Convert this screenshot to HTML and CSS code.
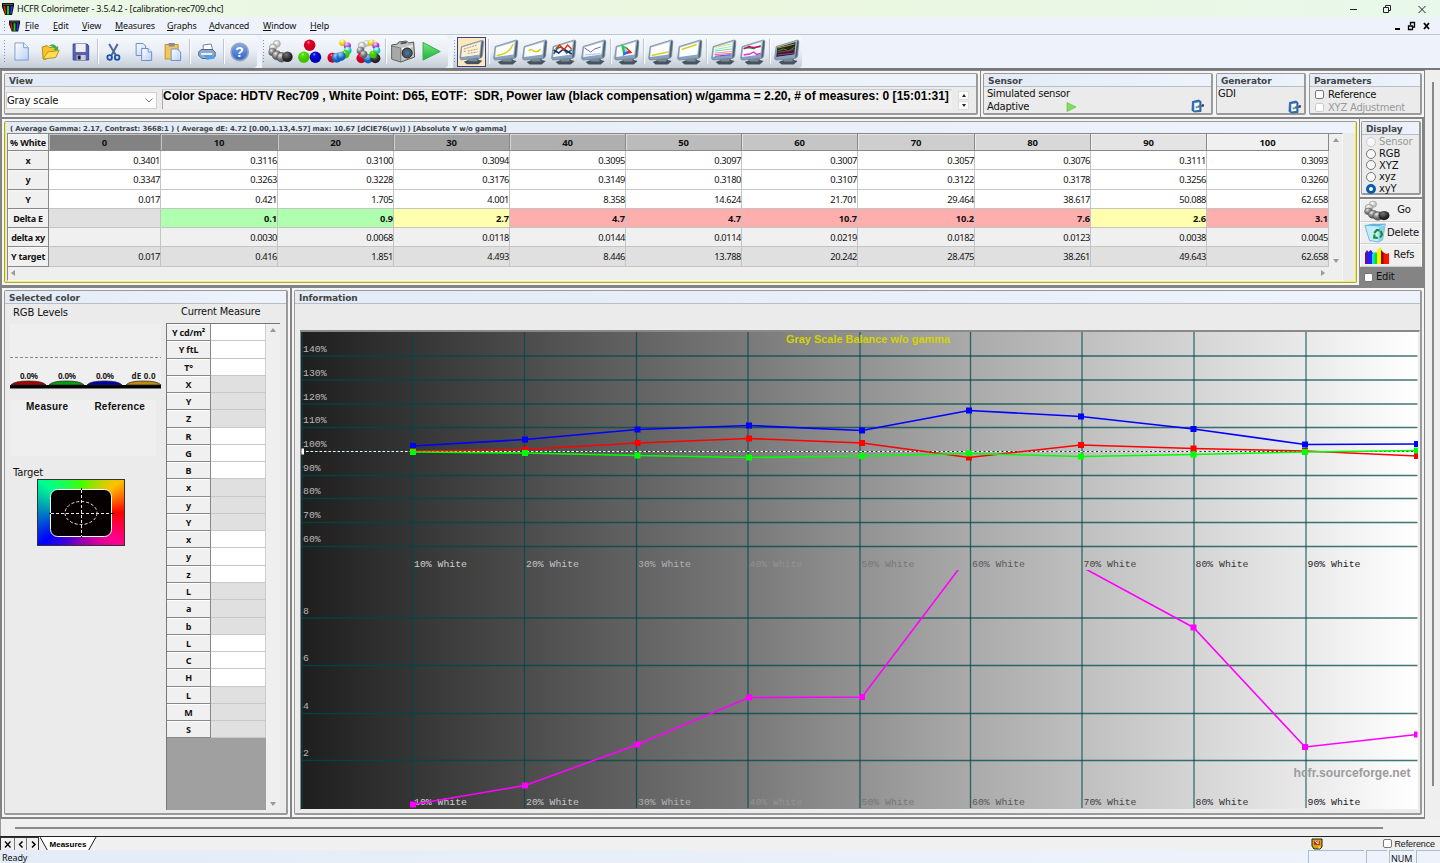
FILE: index.html
```
<!DOCTYPE html>
<html lang="en">
<head>
    <meta charset="UTF-8">
    <title>HCFR Colorimeter - 3.5.4.2 - [calibration-rec709.chc]</title>
    <link rel="stylesheet" href="styles.css">
</head>
<body>
    <!-- Shared icon parts -->
    <svg class="defs" width="0" height="0">
        <defs>
            <radialGradient id="gGray" cx="35%" cy="30%"><stop offset="0" stop-color="#eee"/><stop offset=".4" stop-color="#aaa"/><stop offset="1" stop-color="#666"/></radialGradient>
            <radialGradient id="gLight" cx="40%" cy="35%"><stop offset="0" stop-color="#fff"/><stop offset="1" stop-color="#bbb"/></radialGradient>
            <radialGradient id="gDark" cx="40%" cy="30%"><stop offset="0" stop-color="#777"/><stop offset="1" stop-color="#222"/></radialGradient>
            <radialGradient id="gRed" cx="40%" cy="25%"><stop offset="0" stop-color="#ff9090"/><stop offset=".3" stop-color="#e80028"/><stop offset="1" stop-color="#c80020"/></radialGradient>
            <radialGradient id="gGreen" cx="40%" cy="25%"><stop offset="0" stop-color="#c0ff90"/><stop offset=".3" stop-color="#50e000"/><stop offset="1" stop-color="#40c400"/></radialGradient>
            <radialGradient id="gBlue" cx="40%" cy="25%"><stop offset="0" stop-color="#9090ff"/><stop offset=".3" stop-color="#1010e0"/><stop offset="1" stop-color="#0000b8"/></radialGradient>
            <radialGradient id="gSky" cx="40%" cy="25%"><stop offset="0" stop-color="#a0d0ff"/><stop offset="1" stop-color="#1060c0"/></radialGradient>
            <radialGradient id="gCyan" cx="40%" cy="25%"><stop offset="0" stop-color="#e0ffff"/><stop offset="1" stop-color="#10c0b0"/></radialGradient>
            <radialGradient id="gMag" cx="40%" cy="25%"><stop offset="0" stop-color="#ffd0ff"/><stop offset="1" stop-color="#a030d0"/></radialGradient>
            <radialGradient id="gYel" cx="40%" cy="25%"><stop offset="0" stop-color="#ffffd0"/><stop offset="1" stop-color="#e8c800"/></radialGradient>
            <linearGradient id="gPage" x2="1" y2="1"><stop offset="0" stop-color="#fff"/><stop offset="1" stop-color="#b8d0f8"/></linearGradient>
            <linearGradient id="gCase" x2="0" y2="1"><stop offset="0" stop-color="#b9c6d4"/><stop offset="1" stop-color="#7f9cb8"/></linearGradient>
            <linearGradient id="gPlay" x2="0" y2="1"><stop offset="0" stop-color="#7ae878"/><stop offset="1" stop-color="#18b040"/></linearGradient>
            <linearGradient id="gHelp" x2="0" y2="1"><stop offset="0" stop-color="#7da8f0"/><stop offset="1" stop-color="#3060c8"/></linearGradient>
        </defs>
        <symbol id="logo" viewBox="0 0 12 12">
            <path d="M0 0h12v3l-2 9H3L0 4z" fill="#111"/>
            <path d="M1 1h10v1H1z" fill="#555"/>
            <path d="M1.4 3l1.8 0 1 8H3z" fill="#f01818"/><path d="M5 3h2v8.5H5z" fill="#10d020"/><path d="M8.8 3h1.9L9.6 11H8.2z" fill="#2030ff"/>
        </symbol>
        <symbol id="balls" viewBox="0 0 26 26">
            <circle cx="9" cy="5" r="3.700" fill="url(#gLight)" stroke="#999" stroke-width=".6"/>
            <circle cx="5" cy="9" r="3.800" fill="url(#gLight)" stroke="#888" stroke-width=".6"/>
            <circle cx="4.500" cy="13.500" r="4" fill="url(#gGray)" stroke="#666" stroke-width=".6"/>
            <circle cx="9" cy="17" r="4.800" fill="url(#gGray)" stroke="#555" stroke-width=".6"/>
            <circle cx="14" cy="19" r="5" fill="url(#gGray)" stroke="#444" stroke-width=".6"/>
            <circle cx="20" cy="18.500" r="5.500" fill="url(#gDark)"/>
        </symbol>
        <symbol id="monitor" viewBox="0 0 26 26">
            <path d="M5 23l5-2v-2h10v2l4 1-4 3.500H8z" fill="#46535f"/>
            <path d="M10 20h9v2.500h-9z" fill="#7e8a96"/>
            <path d="M2.500 7.500L23 1.200q2.500-.6 2.300 1.500l-1.300 14q-.2 2.200-2.400 2.800L3 21q-2 0-2-2z" fill="url(#gCase)" stroke="#6b7f93" stroke-width=".7"/>
            <path d="M23.300 1.800q1.700-.4 1.600 1.500l-1.400 13.500q-.5 2-2 2.300z" fill="#4c6074"/>
            <path d="M3.500 8.500L22 3l-1.300 12.500-18.200 2.500z" fill="#fcfdfd"/>
        </symbol>
        <symbol id="edit" viewBox="0 0 13 14">
            <path d="M1.500 2.500L8 1l2 1.500v10L3.500 13 1 11.500z" fill="#2f74c4" stroke="#164880" stroke-width=".7"/>
            <path d="M3.300 4l5-.8v7.600l-5 .6z" fill="#fff"/>
            <path d="M4.500 7.500l3-1 5-1v2l-4.500 1-3 1z" fill="#3b6d9c"/><path d="M5 6.500l2 1-1 2z" fill="#e8cf60"/><path d="M11 5.200l1.800 0v2.200l-1.600.2z" fill="#5a2b20"/>
        </symbol>
    </svg>

    <header class="titlebar">
        <svg class="logo" width="12" height="12"><use href="#logo"/></svg>
        <span class="title">HCFR Colorimeter - 3.5.4.2 - [calibration-rec709.chc]</span>
        <svg class="winctl" width="80" height="14" fill="none" stroke="#222">
            <path d="M2 7.500h7"/><path d="M35.500 5.500h5v5h-5zM37.500 5V3.500h5v5H41"/><path d="M70.500 4l7 7M77.500 4l-7 7"/>
        </svg>
    </header>

    <nav class="menubar">
        <i class="grip"></i>
        <svg width="11" height="12"><use href="#logo"/></svg>
        <span class="m-file"><u>F</u>ile</span><span class="m-edit"><u>E</u>dit</span><span class="m-view"><u>V</u>iew</span><span class="m-meas"><u>M</u>easures</span><span class="m-graph"><u>G</u>raphs</span><span class="m-adv"><u>A</u>dvanced</span><span class="m-win"><u>W</u>indow</span><span class="m-help"><u>H</u>elp</span>
        <svg class="winctl" width="36" height="10" fill="none" stroke="#000">
            <path d="M0 8h5" stroke-width="2"/><path d="M13.500 5h4v3.500h-4zM15.500 4V1.500h4V6H18" stroke-width="1.300"/><path d="M29 2l5 6M34 2l-5 6" stroke-width="1.800"/>
        </svg>
    </nav>

    <div class="toolbars">
        <div class="toolbar t-file">
            <i class="grip"></i>
            <svg height="21" viewBox="0 0 18 22"><path d="M2 2h9l5 5v13H2z" fill="url(#gPage)" stroke="#7c9cd0"/><path d="M11 2v5h5" fill="#e8f0ff" stroke="#7c9cd0"/></svg>
            <svg height="20" viewBox="0 0 20 20"><path d="M1.500 5l5-1.500 2 2 7-.5v3L5 17.500l-2.500-.5z" fill="#f4c430" stroke="#b88a18"/><path d="M2.500 17L7 10l11.500-1.500-3.500 7z" fill="#ffe050" stroke="#c09020"/><path d="M8 4q5-4 8 1l1.500-1v4.500L13 8l1.300-1.300Q12 3.500 8 4z" fill="#38b048"/></svg>
            <svg height="20" viewBox="0 0 18 20"><path d="M1.500 2h14l1.500 2v14h-15.500z" fill="#5560b0" stroke="#404890"/><path d="M4 2h10v8H4z" fill="#f0f0f4"/><path d="M5 13h9v5H5z" fill="#c8ccd8"/><path d="M6 13.500h3v4H6z" fill="#223"/></svg>
            <i class="sep"></i>
            <svg height="20" viewBox="0 0 16 20" fill="none"><path d="M3.500 2l6.500 11M12 2L6 13" stroke="#4a6a98" stroke-width="2"/><circle cx="4" cy="15.500" r="2.300" stroke="#1c50b0" stroke-width="1.800"/><circle cx="11.500" cy="15.500" r="2.300" stroke="#1c50b0" stroke-width="1.800"/></svg>
            <svg height="20" viewBox="0 0 18 20" fill="url(#gPage)" stroke="#6f8fcb"><path d="M1.500 1.500h7l2.500 2.500v9.500H1.500z"/><path d="M7 6.500h6.500L17 10v8.500H7z"/><path d="M13.500 6.500V10H17" fill="#fff"/></svg>
            <svg height="20" viewBox="0 0 18 20"><path d="M1.500 2.500h13V17h-13z" fill="#f0c860" stroke="#c09030"/><path d="M5 1h6v3.500H5z" fill="#8888a0"/><path d="M7.500 7h6l3.500 3v8.500H7.500z" fill="url(#gPage)" stroke="#6f8fcb"/></svg>
            <i class="sep"></i>
            <svg height="18" viewBox="0 0 19 18"><path d="M6 8l0-6 8-1 1.500 6z" fill="#fff" stroke="#6f86a8"/><path d="M1.500 9L4 6.500h11l3 2.500v4.500l-3 2H5l-3.500-3z" fill="#8ea9cc" stroke="#4c6890"/><path d="M7 11.500h8l2.500 4-8 1.500z" fill="#4ca0e8"/><path d="M4 10h11v2H4z" fill="#eef"/></svg>
            <i class="sep"></i>
            <svg height="20" viewBox="0 0 20 20"><circle cx="10" cy="10" r="8.600" fill="url(#gHelp)" stroke="#98a4b8" stroke-width="1.600"/><text class="help-q" x="10" y="15" text-anchor="middle">?</text></svg>
        </div>
        <div class="toolbar t-meas">
            <i class="grip"></i>
            <svg height="25" viewBox="0 0 26 26"><use href="#balls" width="26" height="26"/></svg>
            <svg height="25" viewBox="0 0 26 26"><circle cx="13" cy="6.500" r="6" fill="url(#gRed)"/><circle cx="7" cy="19" r="6" fill="url(#gGreen)"/><circle cx="19" cy="19" r="6" fill="url(#gBlue)"/></svg>
            <svg height="25" viewBox="0 0 26 26"><circle cx="16" cy="4" r="3.500" fill="url(#gYel)"/><circle cx="21" cy="7" r="3.700" fill="url(#gMag)"/><circle cx="21.500" cy="12" r="3.900" fill="url(#gCyan)"/><circle cx="19" cy="16" r="4.300" fill="url(#gGreen)"/><circle cx="5.500" cy="19.500" r="5.200" fill="url(#gRed)"/><circle cx="10" cy="19.500" r="5.200" fill="url(#gSky)"/><circle cx="14.500" cy="18" r="4.800" fill="url(#gSky)"/></svg>
            <svg height="25" viewBox="0 0 26 26"><circle cx="11" cy="4.500" r="3.500" fill="url(#gLight)"/><circle cx="6" cy="7" r="3.800" fill="url(#gLight)" stroke="#999" stroke-width=".5"/><circle cx="4.500" cy="12" r="4" fill="url(#gGray)"/><circle cx="16" cy="4" r="3.500" fill="url(#gYel)"/><circle cx="20.500" cy="7" r="3.700" fill="url(#gMag)"/><circle cx="21.500" cy="12" r="3.700" fill="url(#gCyan)"/><circle cx="5.500" cy="20" r="5.200" fill="url(#gRed)"/><circle cx="12.500" cy="20.500" r="5" fill="url(#gSky)"/><circle cx="20" cy="20" r="5.200" fill="url(#gDark)"/><circle cx="17.500" cy="16" r="3.800" fill="url(#gGreen)"/><circle cx="8" cy="16" r="3.800" fill="url(#gGray)"/></svg>
            <i class="sep"></i>
            <svg height="24" viewBox="0 0 26 24"><path d="M2 5l6-1 1-2 8-1 2 2 5-1 1 15-14 5L2 19z" fill="#c4c4c4" stroke="#555"/><path d="M2 6l9 2v14l-9-3z" fill="#a8a8a8" stroke="#666" stroke-width=".7"/><path d="M12 8l11-3v2l-11 3z" fill="#eee"/><circle cx="17.500" cy="13" r="5" fill="#555" stroke="#222"/><circle cx="17.500" cy="13" r="2.400" fill="#2878c0"/><path d="M11 3.500l6-1" stroke="#444" stroke-width="1.500"/></svg>
            <svg height="21" viewBox="0 0 22 22"><path d="M2 1.500L20 11 2 20z" fill="url(#gPlay)" stroke="#30a848"/></svg>
        </div>
        <div class="toolbar t-view">
            <i class="grip"></i>
            <svg class="selected" viewBox="0 0 26 26"><use href="#monitor" width="26" height="26"/><path d="M3.500 8.500L22 3l-1.300 12.500-18.200 2.500z" fill="#fdf0d4"/><path d="M5 10l13-4M5 12.500l2-.4M9 12l10-2M9 14.500l10-1.500" stroke="#a0805a" stroke-width=".8" stroke-dasharray="2 1"/></svg>
            <i class="sep"></i>
            <svg height="26" viewBox="0 0 26 26"><use href="#monitor" width="26" height="26"/><path d="M4 16.500Q17 15 20.500 5" fill="none" stroke="#d8d020" stroke-width="1.500"/></svg>
            <svg height="26" viewBox="0 0 26 26"><use href="#monitor" width="26" height="26"/><path d="M7 12q2-3 5 0 4 2 7-2" fill="none" stroke="#d8d020" stroke-width="1.500"/></svg>
            <svg height="26" viewBox="0 0 26 26"><use href="#monitor" width="26" height="26"/><g fill="none" stroke-width="1.500"><path d="M3 15l4-6 4-1 5 6 5-3" stroke="#108020"/><path d="M3 11l5 3 5-4 8 5" stroke="#1020a0"/><path d="M5 10l4-4 4 5 4-5 4 4" stroke="#e83010"/></g></svg>
            <svg height="26" viewBox="0 0 26 26"><use href="#monitor" width="26" height="26"/><path d="M4 9l6 4 4-3 6-2" fill="none" stroke="#6868b8"/><path d="M4 16l16-1.500" stroke="#9a9ae0" stroke-width=".7"/></svg>
            <i class="sep"></i>
            <svg height="26" viewBox="0 0 26 26"><use href="#monitor" width="26" height="26"/><path d="M7.500 5.500l6 3-4 7z" fill="#18d040"/><path d="M13 8l6 6-7 1z" fill="#f02020"/><path d="M9 17l1.500-6 5 3z" fill="#3060f0"/><path d="M11 8.500l4 3-4 2z" fill="#80e8e0"/></svg>
            <i class="sep"></i>
            <svg height="26" viewBox="0 0 26 26"><use href="#monitor" width="26" height="26"/><path d="M4 16.500l16.500-3.500" stroke="#d8d020" stroke-width="1.500"/></svg>
            <svg height="26" viewBox="0 0 26 26"><use href="#monitor" width="26" height="26"/><path d="M5 10.500L20 5.500" stroke="#d8d020" stroke-width="1.500"/></svg>
            <i class="sep"></i>
            <svg height="26" viewBox="0 0 26 26"><use href="#monitor" width="26" height="26"/><g stroke-width="1.100"><path d="M4 8.500l17-3.500" stroke="#e0e060"/><path d="M4 10.500l17-3" stroke="#80f0e8"/><path d="M4 12l17-2" stroke="#80e080"/><path d="M4 14l17-1.500" stroke="#f890d0"/><path d="M4 15.500l17-1" stroke="#f86060"/><path d="M4 17.200l16-1.500" stroke="#5050f0"/></g></svg>
            <svg height="26" viewBox="0 0 26 26"><use href="#monitor" width="26" height="26"/><g fill="none" stroke-width="1.300"><path d="M4 9.500l5-1 5 1 7-3" stroke="#208030"/><path d="M4 10l5-2.500 5 1 7-1" stroke="#d01060"/><path d="M4 16l6-1 4-2 3 2.500 4-1" stroke="#f020e0"/></g></svg>
            <i class="sep"></i>
            <svg height="26" viewBox="0 0 26 26"><use href="#monitor" width="26" height="26"/><path d="M3.500 8.500L22 3l-1.300 12.500-18.200 2.500z" fill="#252525"/><g fill="none" stroke-width="1"><path d="M4 9l17-4" stroke="#b0a020"/><path d="M4 12l6-2 5 2 6-4" stroke="#30a030"/><path d="M4 13.500l17-3" stroke="#b03030"/><path d="M4 16l17-2" stroke="#a030b0"/></g></svg>
        </div>
    </div>

    <div class="workspace">
        <main class="form">
            <section class="row row-top">
                <div class="frame view-frame">
                    <div class="panel">
                        <h2>View</h2>
                        <div class="view-body">
                            <div class="combo">Gray scale<svg width="8" height="5" fill="none" stroke="#777"><path d="M.5.5L4 4 7.500.5"/></svg></div>
                            <div class="info-line"><span>Color Space: HDTV Rec709 , White Point: D65, EOTF:&nbsp; SDR, Power law (black compensation) w/gamma = 2.20, # of measures: 0 [15:01:31]</span></div>
                            <div class="spin"><b class="up"></b><b class="down"></b></div>
                        </div>
                    </div>
                </div>
                <div class="frame side-frame">
                    <div class="panel p-sensor">
                        <h2>Sensor</h2>
                        <div class="lines"><p>Simulated sensor</p><p>Adaptive <svg class="mini-play" width="11" height="10"><path d="M1 .5L10 5 1 9.500z" fill="#7fe05a" stroke="#5cb840" stroke-width=".6"/></svg></p></div>
                        <svg class="edit-icon" width="13" height="14"><use href="#edit"/></svg>
                    </div>
                    <div class="panel p-gen">
                        <h2>Generator</h2>
                        <div class="lines"><p>GDI</p></div>
                        <svg class="edit-icon" width="13" height="14"><use href="#edit"/></svg>
                    </div>
                    <div class="panel p-param">
                        <h2>Parameters</h2>
                        <label class="check"><i></i>Reference</label>
                        <label class="check off"><i></i>XYZ Adjustment</label>
                    </div>
                </div>
            </section>

            <section class="row row-grid">
                <div class="frame">
                    <div class="panel p-grid">
                        <h2>( Average Gamma: 2.17, Contrast: 3668:1 ) ( Average dE: 4.72 [0.00,1.13,4.57] max: 10.67 [dCIE76(uv)] ) [Absolute Y w/o gamma]</h2>
                        <div class="grid-wrap">
                            <div class="grid-main">
                                <div class="datagrid" id="datagrid"></div>
                                <div class="vscroll"><b class="up"></b><b class="down"></b></div>
                            </div>
                            <div class="hscroll"><b class="left"></b><b class="right"></b></div>
                        </div>
                    </div>
                </div>
                <aside class="tools">
                    <div class="frame">
                        <div class="panel p-display">
                            <h2>Display</h2>
                            <label class="radio off"><i></i>Sensor</label>
                            <label class="radio"><i></i>RGB</label>
                            <label class="radio"><i></i>XYZ</label>
                            <label class="radio"><i></i>xyz</label>
                            <label class="radio on"><i></i>xyY</label>
                        </div>
                    </div>
                    <div class="buttons">
                        <div class="btn"><svg width="26" height="21" viewBox="0 0 26 25" preserveAspectRatio="none"><use href="#balls" width="26" height="26"/></svg><span>Go</span></div>
                        <div class="btn"><svg width="24" height="20" viewBox="0 0 26 20" preserveAspectRatio="none"><path d="M1 2.500L23 1l-3 16-4 2-10-1.500z" fill="#c4ecfa" stroke="#6cb8dc"/><path d="M1 2.500L9 .8l14 .2-7 2.500z" fill="#5fb4e4"/><path d="M16 4l-.5 14.500L20 17l3-15z" fill="#8cccec"/><path d="M11 10l3-3 3 .5M18 8l1.500 3.500-2 3M15 15l-4-.5.500-3" fill="none" stroke="#109030" stroke-width="2.200"/></svg><span>Delete</span></div>
                        <div class="btn"><svg width="26" height="17" viewBox="0 0 26 17"><path d="M1 17V6l2-3 2 3v11z" fill="#6010a0"/><path d="M4 17V5l3-2 2 3v11z" fill="#2020ff"/><path d="M8 17V7l2-2 2 2v10z" fill="#10e0e0"/><path d="M10.500 17V8l1-3 2 1v11z" fill="#10e010"/><path d="M13 17V3l3-2.500L18 3v14z" fill="#fff000"/><path d="M17 17V3l3 3v11z" fill="#801000"/><path d="M19.500 17V5.500l3 1.500 2.500-1v11z" fill="#ff1000"/></svg><span>Refs</span></div>
                    </div>
                    <label class="check edit-check"><i></i>Edit</label>
                </aside>
            </section>

            <section class="row row-bottom">
                <div class="frame">
                    <div class="panel p-color">
                        <h2>Selected color</h2>
                        <div class="color-body">
                            <div class="color-left">
                                <span class="caption rgb-caption">RGB Levels</span>
                                <svg class="levels" width="151" height="65">
                                    <rect width="151" height="65" fill="#efefef"/>
                                    <path d="M0 33.500h151" stroke="#888" stroke-dasharray="3 2"/>
                                    <rect y="61" width="151" height="3.500" fill="#000"/>
                                    <g stroke="#222" stroke-width=".7">
                                        <path d="M1 61q3-4 17.500-4T36 61z" fill="#a80000"/><path d="M39 61q3-4 17.500-4T74 61z" fill="#00a010"/><path d="M77 61q3-4 17.500-4T112 61z" fill="#0000a8"/><path d="M116 61q3-4 17.500-4T151 61z" fill="#c08a10"/>
                                    </g>
                                    <g class="lvl"><text x="10" y="55" textLength="18">0.0%</text><text x="48" y="55" textLength="18">0.0%</text><text x="86" y="55" textLength="18">0.0%</text><text x="121.500" y="55" textLength="24">dE 0.0</text></g>
                                </svg>
                                <div class="compare"><span>Measure</span><span>Reference</span></div>
                                <span class="caption">Target</span>
                                <div class="target">
                                    <svg width="86" height="66" fill="none"><rect x="12.500" y="9.500" width="61" height="47" rx="7" fill="#060000" stroke="#fff"/><g stroke="#e8e8e8" stroke-dasharray="3 2"><ellipse cx="43" cy="33" rx="16" ry="11.500"/><path d="M43.500 10v46M13 33.500h61"/></g><path d="M11 33.500h2M73 33.500h3M43.500 8v2M43.500 56v2" stroke="#000"/></svg>
                                </div>
                            </div>
                            <div class="color-right">
                                <span class="caption">Current Measure</span>
                                <div class="measure-wrap">
                                    <div class="measures" id="measures"></div>
                                    <div class="vscroll"><b class="up"></b><b class="down"></b></div>
                                </div>
                            </div>
                        </div>
                    </div>
                </div>
                <div class="frame grow">
                    <div class="panel p-info">
                        <h2>Information</h2>
                        <div class="chart-box">
                            <svg id="chart" width="1117" height="477" viewBox="301.500 332 1117 477"></svg>
                        </div>
                    </div>
                </div>
            </section>
        </main>
        <div class="outer-v"><i></i></div>
    </div>
    <div class="outer-h"><i></i></div>

    <footer class="tabs">
        <div class="nav-btns">
            <svg width="13" height="13"><path d="M4 3.500l5.500 6M9.500 3.500l-5.500 6" stroke="#000" stroke-width="1.300"/></svg>
            <svg width="12" height="13"><path d="M7.500 3.500L4.500 6.500l3 3" fill="none" stroke="#000" stroke-width="1.500"/></svg>
            <svg width="12" height="13"><path d="M5 3.500l3 3-3 3" fill="none" stroke="#000" stroke-width="1.500"/></svg>
        </div>
        <svg class="tab" width="58" height="14"><path d="M0 0l7.500 13.500h41L56 0" fill="#fff" stroke="#222"/><text x="9.500" y="10" textLength="37" lengthAdjust="spacingAndGlyphs">Measures</text></svg>
        <svg class="palette" width="12" height="12"><path d="M1 1h10v8l-2 2H3L1 8z" fill="#c8a810" stroke="#222"/><path d="M3 3h6v4H3z" fill="#e82020"/><path d="M4 3l3 3M7 3v3" stroke="#fff"/><path d="M7 8l3 1-2 2z" fill="#ffe820"/></svg>
        <label class="check"><i></i>Reference</label>
    </footer>
    <div class="statusbar"><span class="ready">Ready</span><span class="cell c1"></span><span class="cell c2"></span><span class="cell c3">NUM</span><span class="cell c4"></span></div>

    <script>
        // Gray scale measures, one array entry per column
        const rows = [
            ['x', ['0.3401', '0.3116', '0.3100', '0.3094', '0.3095', '0.3097', '0.3007', '0.3057', '0.3076', '0.3111', '0.3093']],
            ['y', ['0.3347', '0.3263', '0.3228', '0.3176', '0.3149', '0.3180', '0.3107', '0.3122', '0.3178', '0.3256', '0.3260']],
            ['Y', ['0.017', '0.421', '1.705', '4.001', '8.358', '14.624', '21.701', '29.464', '38.617', '50.088', '62.658']],
            ['Delta E', ['', '0.1', '0.9', '2.7', '4.7', '4.7', '10.7', '10.2', '7.6', '2.6', '3.1']],
            ['delta xy', ['', '0.0030', '0.0068', '0.0118', '0.0144', '0.0114', '0.0219', '0.0182', '0.0123', '0.0038', '0.0045']],
            ['Y target', ['0.017', '0.416', '1.851', '4.493', '8.446', '13.788', '20.242', '28.475', '38.261', '49.643', '62.658']]
        ];
        const headShades = [130, 140, 150, 162, 175, 187, 197, 206, 216, 228, 240];

        let html = '<div class="head first">% White</div>';
        headShades.forEach((s, i) => {
            html += `<div class="head num" style="background:rgb(${s},${s},${s})">${i * 10}</div>`;
        });
        rows.forEach(([name, values], r) => {
            html += `<div class="rowhead">${name}</div>`;
            values.forEach(v => {
                let cls = r < 3 ? 'plain' : r === 4 ? 'light' : 'shade';
                if (r === 3 && v) cls = v < 1 ? 'good' : v < 3 ? 'fair' : 'bad';
                html += `<div class="cell ${cls}">${v}</div>`;
            });
        });
        document.getElementById('datagrid').innerHTML = html;

        const labels = ['Y cd/m²', 'Y ftL', 'T°', 'X', 'Y', 'Z', 'R', 'G', 'B', 'x', 'y', 'Y', 'x', 'y', 'z', 'L', 'a', 'b', 'L', 'C', 'H', 'L', 'M', 'S'];
        document.getElementById('measures').innerHTML = labels.map((l, i) =>
            `<b>${l}</b><span class="${Math.floor(i / 3) % 2 ? 'dark' : ''}"></span>`).join('');

        // Chart
        const xs = [413, 525, 637, 748.500, 860.500, 971, 1082.500, 1194.500, 1306.500];
        const px = [413.500, 525.500, 638, 749.500, 862.500, 969.500, 1081.500, 1194, 1305.500, 1417.500];
        let svg = '<defs><linearGradient id="ramp"><stop offset="0" stop-color="#1e1e1e"/><stop offset=".1" stop-color="#353535"/><stop offset=".4" stop-color="#797979"/><stop offset=".6" stop-color="#aaaaaa"/><stop offset="1" stop-color="#fff"/></linearGradient>' +
            '<clipPath id="lower"><rect x="301" y="570" width="1117" height="239"/></clipPath></defs>' +
            '<rect x="301" y="331" width="1118" height="478" fill="url(#ramp)"/>';
        svg += '<g stroke="#004848" stroke-opacity=".75" stroke-width="1.300">';
        xs.forEach(x => svg += `<path d="M${x} 332V808"/>`);
        [356, 380, 404, 427.500, 475.500, 498.500, 522.500, 546.500, 618, 665.500, 713.500, 760.500].forEach(y => svg += `<path d="M302 ${y}H1418"/>`);
        svg += '<path d="M302.500 332V808"/></g>';
        svg += '<path d="M302 451.500H1418" stroke="#0a3c3c"/><path d="M302 451.500H1418" stroke="#fff" stroke-dasharray="2.500 2"/>';
        svg += '<rect x="302" y="448.500" width="2.500" height="6" fill="#fff"/>';
        [[353, '140%'], [377, '130%'], [401, '120%'], [424, '110%'], [448, '100%'], [472, '90%'], [495, '80%'], [519, '70%'], [543, '60%'], [615, '8'], [662, '6'], [710, '4'], [757, '2']]
            .forEach(([y, t]) => svg += `<text class="mono" x="303.500" y="${y - 0.600}" fill="#b8b8b8">${t}</text>`);
        const tints = ['#d0d0d0', '#c4c4c4', '#b0b0b0', '#929292', '#777', '#5a5a5a', '#444', '#333', '#222'];
        xs.forEach((x, i) => [567, 805].forEach(y =>
            svg += `<text class="mono" x="${x + 1.500}" y="${y}" fill="${tints[i]}">${(i + 1) * 10}% White</text>`));
        svg += '<text class="chart-title" x="786.500" y="343" textLength="164" lengthAdjust="spacingAndGlyphs">Gray Scale Balance w/o gamma</text>';
        svg += '<text class="site" x="1294" y="776.500" textLength="117" lengthAdjust="spacingAndGlyphs">hcfr.sourceforge.net</text>';

        function series(color, ys, clip) {
            const pts = ys.map((y, i) => `${px[i]},${y}`).join(' ');
            let s = `<g fill="${color}" ${clip ? 'clip-path="url(#lower)"' : ''}><polyline points="${pts}" fill="none" stroke="${color}" stroke-width="1.600"/>`;
            ys.forEach((y, i) => s += `<rect x="${px[i] - 3}" y="${y - 3}" width="6" height="6"/>`);
            return s + '</g>';
        }
        svg += series('#0000ff', [446, 439.500, 429.500, 425.500, 430.500, 410.500, 416.500, 429, 444.500, 444]);
        svg += series('#ff0000', [451, 449.500, 443, 438.500, 443, 457.500, 445, 448.500, 451, 456]);
        svg += series('#00ff00', [452, 453, 455.500, 457.500, 456, 453.500, 456.500, 454.500, 452, 450.500]);
        svg += series('#ff00ff', [804.500, 785.500, 744.500, 697.500, 697, 555.500, 566.500, 627.500, 747, 734.500], true);
        document.getElementById('chart').innerHTML = svg;
    </script>
</body>
</html>
```
FILE: styles.css
```
* {
    margin: 0;
    padding: 0;
    box-sizing: border-box;
}

body {
    width: 1440px;
    height: 863px;
    overflow: hidden;
    display: flex;
    flex-direction: column;
    background: #f0f0f0;
    color: #111;
    font-family: "DejaVu Sans", Verdana, sans-serif;
    font-size: 10px;
    line-height: 12px;
    white-space: nowrap;
}

.defs {
    position: absolute;
}

svg {
    display: block;
    flex: none;
}

b, i {
    font-style: normal;
}

/* title, menu and toolbars */
.titlebar {
    height: 17px;
    flex: none;
    display: flex;
    align-items: center;
    padding: 0 12px 0 2px;
    background: linear-gradient(90deg, #eaf8e6, #ebf7df 50%, #e8f8ea);
    font-family: "Noto Sans", sans-serif;
    font-size: 9px;
}

.title {
    margin-left: 3px;
    letter-spacing: -0.2px;
}

.winctl {
    margin-left: auto;
}

.menubar {
    height: 18px;
    flex: none;
    display: flex;
    align-items: center;
    padding: 0 9px 0 4px;
    background: #eef3fb;
    border-bottom: 1px solid #c3c6ca;
    font-family: "Noto Sans", sans-serif;
    font-size: 9px;
    letter-spacing: -0.15px;
}

.menubar .grip {
    height: 10px;
    margin-right: 4px;
}

.menubar span {
    flex: none;
}

.m-file { width: 28px; margin-left: 5px; }
.m-edit { width: 29px; }
.m-view { width: 33px; }
.m-meas { width: 52px; }
.m-graph { width: 42px; }
.m-adv { width: 54px; }
.m-win { width: 47px; }

.grip {
    width: 1px;
    height: 24px;
    flex: none;
    margin-right: 2px;
    background: repeating-linear-gradient(#7a90b8 0 1px, transparent 1px 3px);
}

.toolbars {
    height: 35px;
    flex: none;
    display: flex;
    background: #eef3fb;
    border-bottom: 2px solid #777;
}

.toolbar {
    display: flex;
    align-items: center;
    flex: none;
    border-radius: 0 4px 4px 0;
    background: linear-gradient(#f6f9fd, #e9eef5 50%, #c3ccd6);
}

.toolbar > svg {
    width: 29.3px;
}

.sep {
    width: 1px;
    height: 25px;
    flex: none;
    margin: 0 1.7px;
    background: #bcc6d4;
    box-shadow: 1px 0 #fff;
}

.t-file {
    width: 257px;
    padding-left: 4px;
    margin-right: 5px;
}

.t-meas {
    width: 186px;
    padding-left: 1px;
    margin-right: 5px;
}

.t-view {
    width: 349px;
    padding-left: 1px;
}

.toolbar > svg.selected {
    height: 30px;
    padding: 1px;
    background: #fde9bc;
    border: 1px solid #3a3f90;
}

.help-q {
    font: bold 14px "Liberation Sans", sans-serif;
    fill: #fff;
}

/* document window */
.workspace {
    height: 749px;
    flex: none;
    display: flex;
    background: #f0f0f0;
}

.form {
    width: 1425px;
    padding: 1px 1px 1px 2px;
    background: #848484;
    display: flex;
    flex-direction: column;
}

.outer-v {
    width: 15px;
    padding: 12px 0 0 7px;
    background: #efefef;
}

.outer-v i {
    display: block;
    width: 2px;
    height: 704px;
    background: #8a8a8a;
}

.outer-h {
    height: 17px;
    flex: none;
    padding: 8px 0 0 14px;
    background: #f0f0f0;
    border-left: 1px solid #999;
}

.outer-h i {
    display: block;
    width: 1368px;
    height: 2px;
    background: #8a8a8a;
}

.row {
    display: flex;
    flex: none;
}

.row-top {
    height: 46px;
    gap: 1px;
    margin-bottom: 2px;
}

.row-grid {
    height: 166px;
    gap: 1px;
    margin-bottom: 3px;
}

.row-bottom {
    height: 529px;
    gap: 2px;
}

.frame {
    background: #f5f5f5;
    padding: 2px;
    display: flex;
    gap: 3px;
}

.panel {
    flex: auto;
    background: #ebebeb;
    border: 2px solid #9a9a9a;
    border-width: 1px 2px 2px 1px;
    border-radius: 2px;
    position: relative;
}

.panel h2 {
    height: 13px;
    padding-left: 4px;
    font-size: 9px;
    line-height: 14px;
    letter-spacing: -0.1px;
    color: #444;
    background: linear-gradient(90deg, #e2ebf6, #eef3fb);
    border-bottom: 1px solid #b8bec6;
}

.view-frame {
    width: 978px;
}

.view-body {
    display: flex;
    padding: 2px 4px 0 1px;
}

.combo {
    width: 151px;
    height: 17px;
    margin-top: 3px;
    padding: 0 3px 0 0;
    display: flex;
    align-items: center;
    justify-content: space-between;
    background: #fdfdfd;
    border: 1px solid #d0d0d0;
    letter-spacing: -0.15px;
}

.info-line {
    width: 790px;
    height: 20px;
    margin-left: 5px;
    border-left: 1px solid #aaa;
    border-top: 1px solid #ccc;
    background: #f0f0f0;
    font: bold 12px/13px "Liberation Sans", Arial, sans-serif;
    color: #000;
    letter-spacing: 0.02px;
}

.spin {
    width: 11px;
    margin: 2px 0 0 6px;
    display: flex;
    flex-direction: column;
    gap: 1px;
}

.spin b {
    height: 9px;
    background: #fbfbfb;
    border: 1px solid #ddd;
    display: flex;
    align-items: center;
    justify-content: center;
}

b.up::before, b.down::before, b.left::before, b.right::before {
    content: "";
    border: 3px solid transparent;
}

b.up::before { border-top: 0; border-bottom: 4px solid #999; }
b.down::before { border-bottom: 0; border-top: 4px solid #999; }
b.left::before { border-left: 0; border-right: 4px solid #999; }
b.right::before { border-right: 0; border-left: 4px solid #999; }

.spin b.up::before { border-width: 0 2px 3px; border-bottom-color: #222; }
.spin b.down::before { border-width: 3px 2px 0; border-top-color: #222; }

.side-frame {
    width: 443px;
}

.panel.p-sensor { flex: 0 0 230px; }
.panel.p-gen { flex: 0 0 90px; }
.panel.p-param { flex: 1; }

.lines {
    line-height: 13px;
    padding-left: 3px;
    letter-spacing: -0.25px;
}

.p-gen .lines {
    padding-left: 1px;
}

.lines p {
    display: flex;
    align-items: center;
}

.mini-play {
    margin-left: 37px;
}

.edit-icon {
    position: absolute;
    right: 7px;
    bottom: 0;
}

.p-gen .edit-icon {
    right: 3px;
    bottom: -1px;
}

.check {
    display: flex;
    align-items: center;
    height: 13px;
    padding-left: 5px;
    letter-spacing: -0.25px;
}

.p-param .check {
    position: relative;
    top: 1px;
}

.check i {
    width: 9px;
    height: 9px;
    margin-right: 4px;
    background: #fff;
    border: 1px solid #777;
    border-radius: 2px;
}

.off {
    color: #999;
}

.check.off i, .radio.off i {
    border-color: #ccc;
}

/* measures grid */
.p-grid {
    width: 1353px;
    padding-left: 1px;
    border-width: 1px;
    border-color: #9a9a9a #a8a840 #a8a840 #a8a840;
    box-shadow: inset 1px 0 #f2ee60, inset -1px 0 #f2ee40, inset 0 -1px #f2ee60;
}

.panel.p-grid h2 {
    height: 11px;
    padding-left: 4px;
    margin-right: 1px;
    font-size: 7px;
    line-height: 14px;
    letter-spacing: -0.14px;
    overflow: hidden;
    border-bottom: 0;
}

.grid-wrap {
    width: 1336px;
    margin-left: 1px;
    border: 1px solid #888;
    border-right-color: #f5f5f5;
    border-bottom-color: #f5f5f5;
    background: #efefef;
}

.grid-main {
    display: flex;
}

.datagrid {
    display: grid;
    grid-template-columns: 41px 112px 117px 116px 116px 116px 116px 116px 117px 116px 116px 122px;
    grid-template-rows: 17px repeat(6, 19.3px);
    font-family: "Noto Sans", "Open Sans", sans-serif;
    font-size: 9px;
}

.head, .rowhead {
    font-weight: bold;
    text-align: center;
    border-right: 1px solid #888;
    border-bottom: 1px solid #888;
    background: #f0f0f0;
    line-height: 17px;
    letter-spacing: -0.15px;
    box-shadow: inset 1px 1px rgba(255, 255, 255, 0.5);
}

.head.num {
    font-size: 9.5px;
}

.rowhead {
    line-height: 19px;
    letter-spacing: -0.25px;
}

.datagrid .cell {
    text-align: right;
    line-height: 20px;
    border-right: 1px solid #c4c4c4;
    border-bottom: 1px solid #c4c4c4;
    letter-spacing: -0.4px;
    font-size: 9.3px;
}

.plain { background: #fff; }
.light { background: #f0f0f0; }
.shade { background: #e0e0e0; }

.datagrid .good, .datagrid .fair, .datagrid .bad {
    font-weight: bold;
    letter-spacing: -0.1px;
}

.good { background: #aeffae; }
.fair { background: #ffffae; }
.bad { background: #ffaeae; }

.vscroll {
    width: 14px;
    display: flex;
    flex-direction: column;
    justify-content: space-between;
    align-items: center;
    padding: 4px 0;
    background: #efefef;
}

.vscroll b {
    display: flex;
}

.hscroll {
    height: 13px;
    width: 1320px;
    display: flex;
    justify-content: space-between;
    align-items: center;
    padding: 0 3px;
}

.hscroll b {
    display: flex;
}

/* right hand tools */
.tools {
    width: 62px;
}

.tools .frame {
    height: 78px;
    padding: 2px 1px;
}

.p-display h2 {
    margin-bottom: 1px;
}

.radio {
    display: flex;
    align-items: center;
    height: 11.8px;
    padding-left: 4px;
    letter-spacing: -0.15px;
}

.radio i {
    width: 10px;
    height: 10px;
    margin-right: 3px;
    border: 1px solid #777;
    border-radius: 50%;
    background: #f8f8f8;
}

.radio.on i {
    background: #fff;
    border: 3px solid #0a5cb0;
}

.buttons {
    margin-top: 2px;
    background: #f8f8f8;
}

.btn {
    height: 22.500px;
    display: flex;
    align-items: center;
    padding-left: 3px;
    background: #efefef;
    border: 1px solid #fafafa;
    border-bottom-color: #ccc;
    letter-spacing: -0.15px;
}

.btn span {
    flex: 1;
    text-align: center;
    margin-left: -3px;
}

.edit-check {
    margin-top: 4px;
    padding-left: 4px;
}

.edit-check i {
    margin-right: 3px;
}

/* selected colour */
.panel.p-color {
    flex: 0 0 284px;
}

.color-body {
    display: flex;
}

.color-left {
    width: 161px;
    padding: 3px 0 0 5px;
}

.caption {
    display: block;
    padding-left: 3px;
    letter-spacing: -0.15px;
}

.levels {
    margin-top: 5px;
}

.lvl text {
    font: bold 8px "Noto Sans", sans-serif;
    fill: #222;
}

.compare {
    width: 145px;
    height: 56px;
    margin: 11px 0 11px 1px;
    padding: 0 11px 0 15px;
    display: flex;
    justify-content: space-between;
    background: #efefef;
    font: bold 10px/14px "Liberation Sans", Arial, sans-serif;
    letter-spacing: 0.25px;
}

.target {
    width: 88px;
    height: 67px;
    margin: 0 0 0 27px;
    border: 1px solid #333;
    background: conic-gradient(from 90deg at 50% 50%, #ff0000, #ff0090 38deg, #9000b0 90deg, #0000ff 142deg, #0080c0 180deg, #00ff90 218deg, #40ff00 270deg, #ffc000 322deg, #ff0000 360deg);
}

.color-right .caption {
    padding: 2px 0 0 15px;
    margin-bottom: 5px;
    font-size: 9.800px;
}

.measure-wrap {
    height: 487px;
    display: flex;
    border-top: 1px solid #777;
    border-left: 1px solid #777;
}

.measures {
    width: 99px;
    display: grid;
    grid-template-columns: 44px 55px;
    grid-auto-rows: 17.270px;
    align-content: start;
    background: #a0a0a0;
    font-family: "Noto Sans", sans-serif;
    font-size: 9px;
}

.measures b {
    text-align: center;
    line-height: 17px;
    background: #f0f0f0;
    border-right: 1px solid #888;
    border-bottom: 1px solid #888;
    box-shadow: inset 0 1px #fff;
    letter-spacing: -0.15px;
}

.measures span {
    background: #fff;
    border-bottom: 1px solid #c8c8c8;
    border-right: 1px solid #ccc;
}

.measures span.dark {
    background: #e0e0e0;
}

/* chart */
.grow {
    flex: 1;
}

.chart-box {
    margin: 26px 0 0 5px;
    width: 1120px;
    border: 2px solid #8a8a8a;
    border-right: 1px solid #eee;
    border-bottom: 1px solid #eee;
    border-left-width: 1px;
}

.mono {
    font: 9.800px "Liberation Mono", "Courier New", monospace;
}

.chart-title {
    font: bold 11px "Liberation Sans", Arial, sans-serif;
    fill: #d4d400;
}

.site {
    font: bold 12px "Liberation Sans", Arial, sans-serif;
    fill: #9c9c9c;
}

/* tabs and status bar */
.tabs {
    height: 14px;
    flex: none;
    display: flex;
    align-items: center;
    border-top: 1px solid #222;
    padding-right: 5px;
    background: #f0f0f0;
}

.nav-btns {
    display: flex;
    border: 1px solid #333;
    height: 14px;
}

.nav-btns svg + svg {
    border-left: 1px solid #777;
}

.tab {
    margin-left: 1px;
}

.tab text {
    font: bold 8px "Liberation Sans", sans-serif;
}

.palette {
    margin-left: auto;
}

.tabs .check {
    margin-left: 55px;
    font: 9px "Liberation Sans", sans-serif;
    letter-spacing: -0.1px;
}

.tabs .check i {
    margin-right: 2px;
}

.statusbar {
    height: 13px;
    flex: none;
    display: flex;
    gap: 2px;
    background: linear-gradient(90deg, #e3ecf7, #eef3fb);
    font-family: "Noto Sans", sans-serif;
    font-size: 9px;
    line-height: 15px;
    letter-spacing: -0.1px;
}

.ready {
    flex: 1;
    padding-left: 2px;
}

.statusbar .cell {
    border-left: 1px solid #a8bcd8;
    border-top: 1px solid #a8bcd8;
}

.c1 { width: 56px; }
.c2 { width: 21px; }
.c3 { width: 25px; padding-left: 1px; }
.c4 { width: 24px; }
```
